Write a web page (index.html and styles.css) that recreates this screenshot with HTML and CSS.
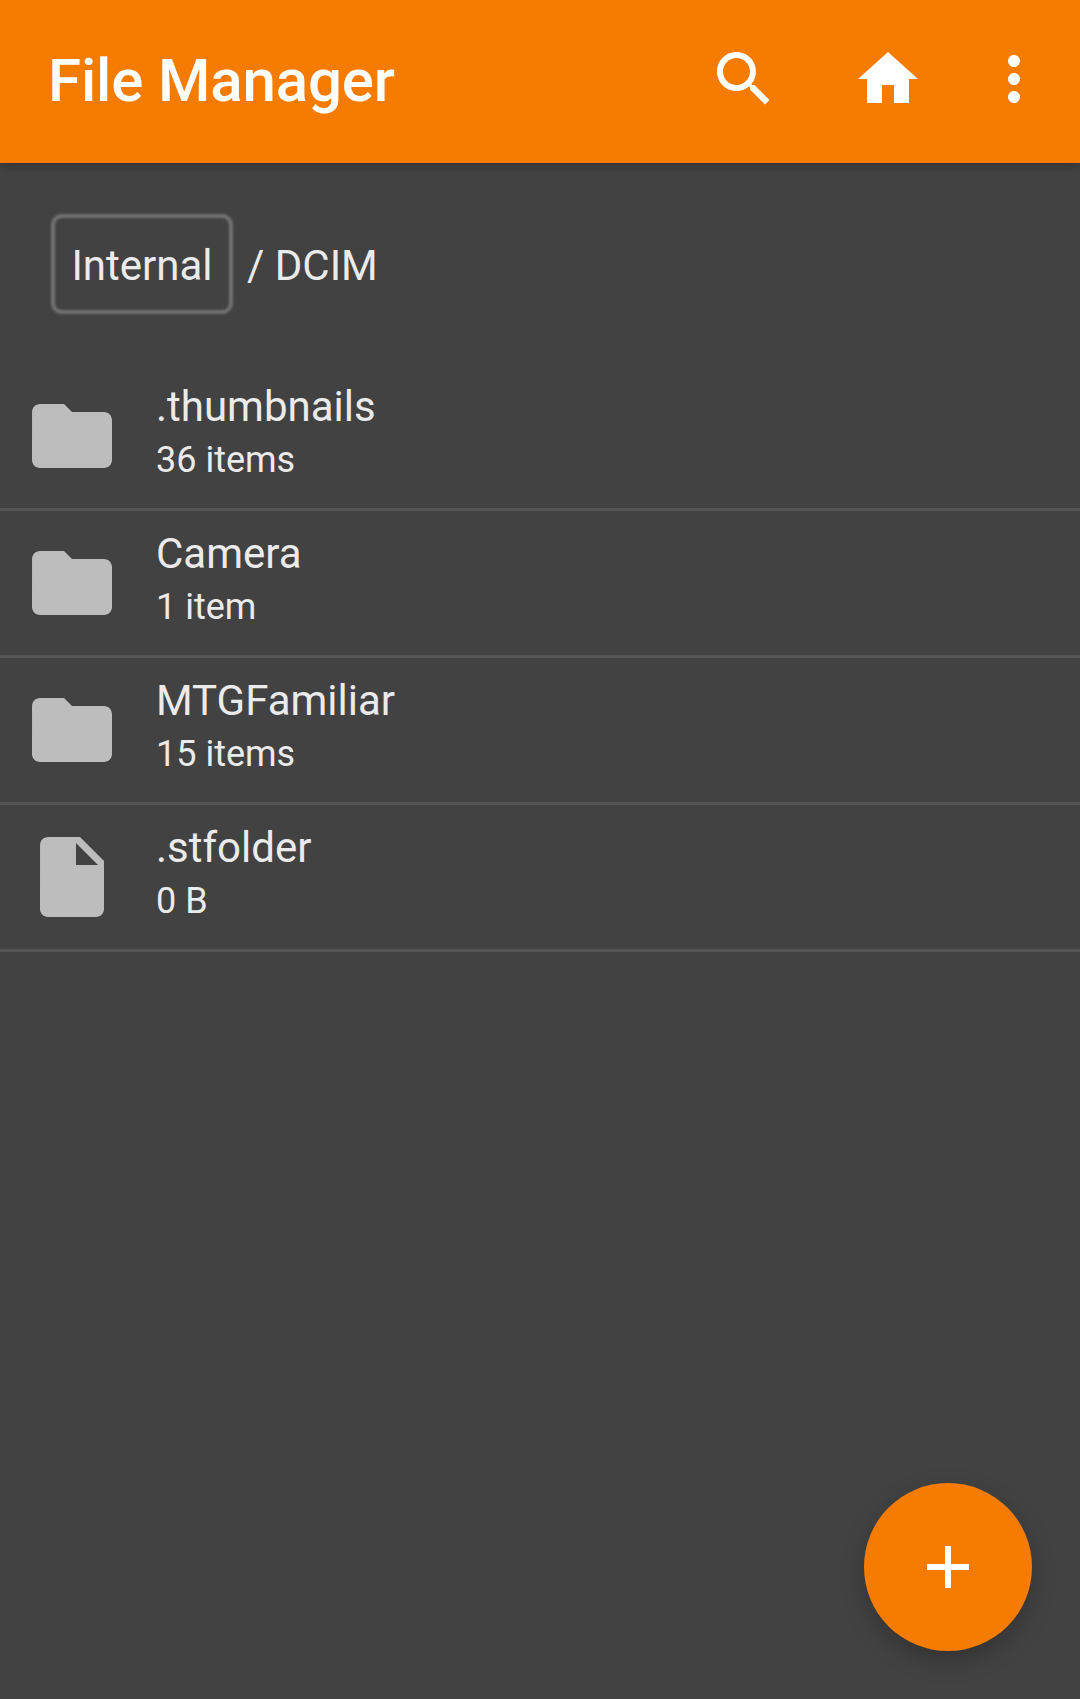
FILE: index.html
```html
<!DOCTYPE html>
<html lang="en">
<head>
<meta charset="utf-8">
<title>File Manager</title>
<link rel="stylesheet" href="styles.css">
</head>
<body>
<div class="app">
  <header class="toolbar">
    <h1 class="title">File Manager</h1>
    <div class="actions">
      <svg class="icon action-search" viewBox="0 0 24 24"><path d="M15.5 14h-.79l-.28-.27C15.41 12.59 16 11.11 16 9.5 16 5.91 13.09 3 9.5 3S3 5.91 3 9.5 5.91 16 9.5 16c1.61 0 3.09-.59 4.23-1.57l.27.28v.79l5 4.99L20.49 19l-4.99-5zm-6 0C7.01 14 5 11.99 5 9.5S7.01 5 9.5 5 14 7.01 14 9.5 11.99 14 9.5 14z"/></svg>
      <svg class="icon action-home" viewBox="0 0 24 24"><path d="M10 20v-6h4v6h5v-8h3L12 3 2 12h3v8z"/></svg>
      <svg class="icon action-more" viewBox="0 0 24 24"><path d="M12 8c1.1 0 2-.9 2-2s-.9-2-2-2-2 .9-2 2 .9 2 2 2zm0 2c-1.1 0-2 .9-2 2s.9 2 2 2 2-.9 2-2-.9-2-2-2zm0 6c-1.1 0-2 .9-2 2s.9 2 2 2 2-.9 2-2-.9-2-2-2z"/></svg>
    </div>
  </header>
  <nav class="crumbs">
    <span class="crumb-root">Internal</span>
    <span class="crumb-path">/ DCIM</span>
  </nav>
  <ul class="list">
    <li class="row">
      <svg class="row-icon" viewBox="0 0 24 24"><path d="M10 4H4c-1.1 0-1.99.9-1.99 2L2 18c0 1.1.9 2 2 2h16c1.1 0 2-.9 2-2V8c0-1.1-.9-2-2-2h-8l-2-2z"/></svg>
      <div class="row-text"><div class="row-name">.thumbnails</div><div class="row-meta">36 items</div></div>
    </li>
    <li class="row">
      <svg class="row-icon" viewBox="0 0 24 24"><path d="M10 4H4c-1.1 0-1.99.9-1.99 2L2 18c0 1.1.9 2 2 2h16c1.1 0 2-.9 2-2V8c0-1.1-.9-2-2-2h-8l-2-2z"/></svg>
      <div class="row-text"><div class="row-name">Camera</div><div class="row-meta">1 item</div></div>
    </li>
    <li class="row">
      <svg class="row-icon" viewBox="0 0 24 24"><path d="M10 4H4c-1.1 0-1.99.9-1.99 2L2 18c0 1.1.9 2 2 2h16c1.1 0 2-.9 2-2V8c0-1.1-.9-2-2-2h-8l-2-2z"/></svg>
      <div class="row-text"><div class="row-name">MTGFamiliar</div><div class="row-meta">15 items</div></div>
    </li>
    <li class="row">
      <svg class="row-icon" viewBox="0 0 24 24"><path fill-rule="evenodd" d="M6 2c-1.1 0-1.99.9-1.99 2L4 20c0 1.1.89 2 1.99 2H18c1.1 0 2-.9 2-2V8l-6-6H6zm7 7V3.5L18.5 9H13z"/></svg>
      <div class="row-text"><div class="row-name">.stfolder</div><div class="row-meta">0 B</div></div>
    </li>
  </ul>
  <button class="fab" type="button" aria-label="Add">
    <svg class="icon" viewBox="0 0 24 24"><path d="M19 13h-6v6h-2v-6H5v-2h6V5h2v6h6v2z"/></svg>
  </button>
</div>
</body>
</html>
```
FILE: styles.css
```css
* { box-sizing: border-box; }
html, body { margin: 0; padding: 0; }
body { background: #424242; font-family: Roboto, "Liberation Sans", sans-serif; }
.app { position: relative; width: 1080px; height: 1699px; overflow: hidden; background: #424242; color: #ebebeb; }

.toolbar {
  position: relative;
  display: flex;
  justify-content: space-between;
  align-items: flex-start;
  height: 163px;
  padding: 43px 30px 0 48px;
  background: #f57c00;
  box-shadow: 0 3px 9px rgba(0, 0, 0, 0.22);
}
.title { margin: 0; font-size: 60px; line-height: 76px; font-weight: 500; letter-spacing: -0.15px; color: #ffffff; }
.actions { display: flex; }
.icon { display: block; width: 72px; height: 72px; fill: #ffffff; }
.action-search { margin-right: 72px; }
.action-home { margin-right: 54px; }

.crumbs { display: flex; align-items: center; height: 201px; padding: 0 0 0 51px; font-size: 42px; }
.crumb-root {
  position: relative;
  display: flex;
  align-items: center;
  justify-content: center;
  width: 182px;
  height: 100px;
  padding-top: 4px;
}
.crumb-root::before {
  content: "";
  position: absolute;
  inset: 0;
  border: 4px solid #717171;
  border-radius: 11px;
  filter: blur(1.2px);
}
.crumb-path { margin-left: 14px; padding-top: 4px; }

.list { list-style: none; margin: 0; padding: 0; }
.row { display: flex; align-items: center; height: 147px; padding: 0 0 0 24px; border-bottom: 3px solid #555555; }
.row-icon { flex: none; width: 96px; height: 96px; fill: #bdbdbd; }
.row-text { margin-left: 36px; padding-bottom: 14px; }
.row-name { font-size: 42px; line-height: 61px; }
.row-meta { font-size: 36px; line-height: 46px; }

.fab {
  position: absolute;
  left: 864px;
  top: 1483px;
  display: flex;
  align-items: center;
  justify-content: center;
  width: 168px;
  height: 168px;
  padding: 0;
  border: 0;
  border-radius: 50%;
  background: #f57c00;
  box-shadow: 0 9px 24px rgba(0, 0, 0, 0.22);
}
```
